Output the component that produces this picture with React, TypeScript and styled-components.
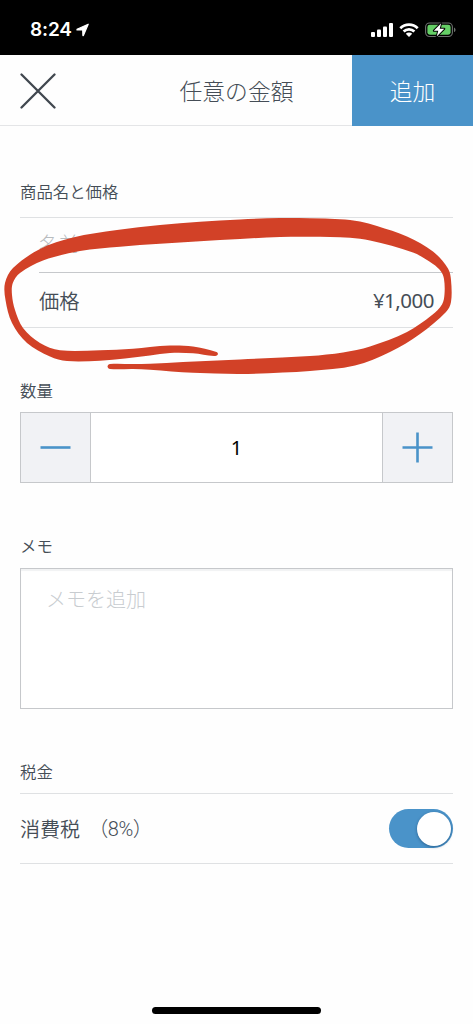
import React, { useState } from 'react';
import styled, { createGlobalStyle } from 'styled-components';

const color = {
  ink: '#454d56',
  blue: '#4a93c9',
  line: '#dfe1e3',
  border: '#c6c8cb',
  panel: '#f1f2f5',
  placeholder: '#c8ccd0',
  marker: '#d24127',
};

const GlobalStyle = createGlobalStyle`
  * { box-sizing: border-box; }
  body {
    margin: 0;
    background: #fefefe;
    color: ${color.ink};
    font-family: "Noto Sans CJK JP", sans-serif;
    font-weight: 350;
  }
  button, input, textarea { font: inherit; color: inherit; border: 0; padding: 0; margin: 0; background: none; border-radius: 0; outline: 0; }
`;

const Screen = styled.div`
  position: relative;
  width: 473px;
  height: 1024px;
  display: flex;
  flex-direction: column;
  overflow: hidden;
`;

const StatusBar = styled.div`
  height: 55px;
  flex: none;
  display: flex;
  align-items: center;
  justify-content: space-between;
  padding: 4px 17px 0 30px;
  background: #000;
  color: #fff;
`;

const Clock = styled.div`
  display: flex;
  align-items: center;
  gap: 4px;
  font: 600 19px/24px Inter, sans-serif;
  letter-spacing: -0.15px;
`;

const StatusIcons = styled.div`
  display: flex;
  align-items: center;
  gap: 6px;
`;

const NavBar = styled.header`
  height: 71px;
  flex: none;
  display: grid;
  grid-template-columns: 121px 1fr 121px;
  border-bottom: 1px solid #e4e5e7;
`;

const CloseButton = styled.button`
  display: flex;
  align-items: center;
  padding-left: 20px;
`;

const Title = styled.h1`
  margin: 0;
  font-size: 22.8px;
  font-weight: 300;
  line-height: 71px;
  text-align: center;
  white-space: nowrap;
`;

const AddButton = styled.button`
  && {
    background: ${color.blue};
    color: #fff;
  }
  height: 71px;
  font-size: 22.8px;
  font-weight: 300;
  line-height: 71px;
`;

const Content = styled.main`
  display: flex;
  flex-direction: column;
  padding: 53px 20px 0;
`;

const Section = styled.section<{ $gap: number }>`
  margin-bottom: ${(p) => p.$gap}px;
`;

const Label = styled.h2<{ $space: number }>`
  margin: 0 0 ${(p) => p.$space}px;
  font-size: 16.4px;
  font-weight: 350;
  line-height: 24px;
`;

const Fields = styled.div`
  border-top: 1px solid ${color.line};
  border-bottom: 1px solid ${color.line};
`;

const Field = styled.div<{ $divided?: boolean }>`
  height: ${(p) => (p.$divided ? 55 : 54)}px;
  margin-left: 19px;
  padding-right: 19px;
  display: flex;
  align-items: center;
  justify-content: space-between;
  font-size: 20.3px;
  border-top: ${(p) => (p.$divided ? `1px solid ${color.border}` : '0')};
`;

const Placeholder = styled.span`
  padding-bottom: 4px;
  color: #b8bcbf;
  font-weight: 300;
`;

const Price = styled.span`
  font: 400 20.5px/24px "Noto Sans", sans-serif;
  letter-spacing: -0.5px;
`;

const Stepper = styled.div`
  height: 71px;
  display: grid;
  grid-template-columns: 69px 1fr 69px;
  border: 1px solid ${color.border};
  background: #fff;
`;

const StepButton = styled.button`
  && {
    background: ${color.panel};
  }
  display: flex;
  align-items: center;
  justify-content: center;
`;

const Quantity = styled.output`
  display: flex;
  align-items: center;
  justify-content: center;
  border: solid ${color.border};
  border-width: 0 1px;
  color: #000;
  font: 400 20px/24px "Noto Sans", sans-serif;
`;

const Memo = styled.textarea`
  display: block;
  width: 100%;
  height: 141px;
  resize: none;
  && {
    border: 1px solid ${color.border};
    padding: 15px 25px;
    background: #fff;
  }
  font-size: 20px;
  line-height: 30px;
  box-shadow: inset 0 2px 1px #f1f2f3;
  &::placeholder { color: ${color.placeholder}; opacity: 1; font-weight: 300; }
`;

const TaxRow = styled.div`
  height: 71px;
  display: flex;
  align-items: center;
  justify-content: space-between;
  border: solid ${color.line};
  border-width: 1px 0;
  font-size: 20px;
`;

const TaxName = styled.span`
  display: flex;
  white-space: pre;
`;

const Rate = styled.span`
  margin-left: 4px;
  letter-spacing: -0.5px;
  font: 300 20px/30px Roboto, "Noto Sans CJK JP", sans-serif;
`;

const Toggle = styled.button<{ $on: boolean }>`
  && {
    width: 64px;
    height: 39px;
    padding: 2px;
    border-radius: 20px;
    background: ${(p) => (p.$on ? color.blue : color.border)};
  }
  display: flex;
  align-items: center;
  justify-content: ${(p) => (p.$on ? 'flex-end' : 'flex-start')};
`;

const Knob = styled.span`
  width: 34px;
  height: 34px;
  border-radius: 50%;
  background: #fff;
  box-shadow: 0 1px 3px rgba(0, 40, 80, 0.45);
`;

const HomeIndicator = styled.div`
  width: 169px;
  height: 7px;
  margin: auto auto 10px;
  border-radius: 4px;
  background: #000;
`;

const Annotation = styled.svg`
  position: absolute;
  inset: 0;
  pointer-events: none;
`;

type Point = [number, number];

const markerOutline: Point[] = [
  [214, 356], [193, 353.3], [170, 353], [150, 355.5], [125, 358.5], [100, 360.7], [67, 361], [50, 356.5], [27, 343],
  [12, 323], [5.5, 300], [5, 283], [13, 268], [40, 249], [73, 237.5], [117, 230], [160, 225], [200, 221.8],
  [240, 219.5], [280, 218], [310, 218.3], [340, 219.3], [360, 221.5], [377, 226], [407, 236.5], [433, 251.5],
  [448, 268.5], [451, 280], [451, 302], [446, 312], [420, 334], [390, 352], [355, 365.5], [310, 371],
  [283, 372.5], [240, 374], [193, 372.8], [150, 369.7], [133, 369], [110, 369], [107.5, 366.5], [110, 364],
  [133, 364], [150, 363.7], [183, 362], [240, 359.5], [310, 356], [343, 352.5], [370, 346.5], [407, 332],
  [432, 315], [442, 304.5], [444.5, 294], [444, 279], [441, 271.5], [433, 264], [413, 252.5], [370, 240.5],
  [350, 237.7], [310, 236.7], [280, 237], [240, 239], [200, 241.3], [160, 243.8], [120, 246.7], [80, 251],
  [43, 260.5], [20, 273], [12.8, 283], [12, 295], [15, 310], [23, 328], [40, 343], [60, 350.3], [100, 350.3],
  [133, 348.7], [150, 347], [170, 345.5], [193, 346.5], [216.5, 352], [217.8, 354.5],
];

/** Unit tangent at each outline point, along the line between its neighbours. */
const tangents = (pts: Point[]) =>
  pts.map((_, i): Point => {
    const a = pts[(i - 1 + pts.length) % pts.length];
    const b = pts[(i + 1) % pts.length];
    const length = Math.hypot(b[0] - a[0], b[1] - a[1]);
    return [(b[0] - a[0]) / length, (b[1] - a[1]) / length];
  });

/** Closed smooth curve; every handle is a third of its segment's length. */
const smooth = (pts: Point[]) => {
  const dir = tangents(pts);
  const segments = pts.map((p, i) => {
    const j = (i + 1) % pts.length;
    const q = pts[j];
    const h = Math.hypot(q[0] - p[0], q[1] - p[1]) / 3;
    return `C${p[0] + dir[i][0] * h} ${p[1] + dir[i][1] * h} ${q[0] - dir[j][0] * h} ${q[1] - dir[j][1] * h} ${q[0]} ${q[1]}`;
  });
  return `M${pts[0][0]} ${pts[0][1]}${segments.join('')}Z`;
};

const LocationIcon = () => (
  <svg width="14" height="14" viewBox="0 0 14 14">
    <path d="M12.2 1.2 1 6.3v.6h5.7l.2 5.7h.5Z" fill="#fff" stroke="#fff" strokeWidth="1.2" strokeLinejoin="round" />
  </svg>
);

const SignalIcon = () => (
  <svg width="22" height="14" viewBox="0 0 22 14" fill="#fff">
    <rect x="0" y="9" width="4" height="5" rx="1" />
    <rect x="6" y="6.5" width="4" height="7.5" rx="1" />
    <rect x="12" y="3.5" width="4" height="10.5" rx="1" />
    <rect x="18" y="0" width="4" height="14" rx="1" />
  </svg>
);

const WifiIcon = () => (
  <svg width="20" height="14" viewBox="0 0 20 14">
    <path d="M1.3 5.2a12.4 12.4 0 0 1 17.4 0M4.6 8.5a7.7 7.7 0 0 1 10.8 0" fill="none" stroke="#fff" strokeWidth="2.7" />
    <path d="M10 14 6.8 10.8a4.6 4.6 0 0 1 6.4 0Z" fill="#fff" />
  </svg>
);

const BatteryIcon = () => (
  <svg width="31" height="16" viewBox="0 0 31 16">
    <rect x=".6" y="1" width="26.8" height="13.5" rx="4" fill="none" stroke="#6d716e" strokeWidth="1.1" />
    <rect x="2.4" y="2.7" width="23.2" height="10" rx="2.4" fill="#65cf66" />
    <path d="M29 5.4c2 .8 2 3.9 0 4.7Z" fill="#6d716e" />
    <path
      d="m16.2 1.2-7.4 7.6h4.5L11.7 14.6l7.6-7.8h-4.6Z"
      fill="#fff"
      stroke="#000"
      strokeWidth="2"
      strokeLinejoin="round"
      paintOrder="stroke"
    />
  </svg>
);

const CloseIcon = () => (
  <svg width="36" height="36" viewBox="0 0 36 36">
    <path d="M1.5 1.5 34.5 34.5M34.5 1.5 1.5 34.5" stroke="#40474f" strokeWidth="2.3" strokeLinecap="round" />
  </svg>
);

const StepIcon = ({ plus }: { plus?: boolean }) => (
  <svg width="31" height="31" viewBox="0 0 31 31">
    <path d={plus ? 'M.5 15.5H30.5M15.5.5V30.5' : 'M.5 15.5H30.5'} stroke={color.blue} strokeWidth="2.6" />
  </svg>
);

export default function App() {
  const [quantity, setQuantity] = useState(1);
  const [taxed, setTaxed] = useState(true);

  return (
    <Screen>
      <GlobalStyle />
      <StatusBar>
        <Clock>
          8:24
          <LocationIcon />
        </Clock>
        <StatusIcons>
          <SignalIcon />
          <WifiIcon />
          <BatteryIcon />
        </StatusIcons>
      </StatusBar>

      <NavBar>
        <CloseButton aria-label="閉じる">
          <CloseIcon />
        </CloseButton>
        <Title>任意の金額</Title>
        <AddButton>追加</AddButton>
      </NavBar>

      <Content>
        <Section $gap={50}>
          <Label $space={14}>商品名と価格</Label>
          <Fields>
            <Field>
              <Placeholder>名前</Placeholder>
            </Field>
            <Field $divided>
              <span>価格</span>
              <Price>¥1,000</Price>
            </Field>
          </Fields>
        </Section>

        <Section $gap={50}>
          <Label $space={10}>数量</Label>
          <Stepper>
            <StepButton aria-label="減らす" onClick={() => setQuantity((q) => Math.max(1, q - 1))}>
              <StepIcon />
            </StepButton>
            <Quantity>{quantity}</Quantity>
            <StepButton aria-label="増やす" onClick={() => setQuantity((q) => q + 1)}>
              <StepIcon plus />
            </StepButton>
          </Stepper>
        </Section>

        <Section $gap={50}>
          <Label $space={11}>メモ</Label>
          <Memo placeholder="メモを追加" />
        </Section>

        <Section $gap={0}>
          <Label $space={10}>税金</Label>
          <TaxRow>
            <TaxName>
              消費税<Rate> （8%）</Rate>
            </TaxName>
            <Toggle $on={taxed} role="switch" aria-checked={taxed} aria-label="消費税" onClick={() => setTaxed(!taxed)}>
              <Knob />
            </Toggle>
          </TaxRow>
        </Section>
      </Content>

      <HomeIndicator />

      <Annotation width="473" height="1024" viewBox="0 0 473 1024">
        <path d={smooth(markerOutline)} fill={color.marker} />
      </Annotation>
    </Screen>
  );
}
